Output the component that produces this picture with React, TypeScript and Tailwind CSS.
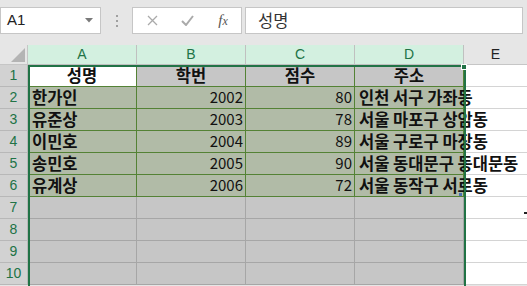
import React from 'react'

const rows = [
  ['성명', '학번', '점수', '주소'],
  ['한가인', '2002', '80', '인천 서구 가좌동'],
  ['유준상', '2003', '78', '서울 마포구 상암동'],
  ['이민호', '2004', '89', '서울 구로구 마장동'],
  ['송민호', '2005', '90', '서울 동대문구 동대문동'],
  ['유계상', '2006', '72', '서울 동작구 서로동'],
  ['', '', '', ''],
  ['', '', '', ''],
  ['', '', '', ''],
  ['', '', '', ''],
]

const kr = '[font-family:"Noto_Sans_CJK_KR",sans-serif]'

function cellClass(r: number, c: number) {
  if (r === 0 && c === 0) return 'bg-white border-r border-b border-[#548235] justify-center font-bold text-[16.5px]'
  if (r === 0) return 'bg-[#c6c6c6] border-r border-b border-[#548235] justify-center font-bold text-[16.5px]'
  if (r <= 5) {
    if (c === 1 || c === 2) return 'bg-[#b1bba7] border-r border-b border-[#548235] justify-end pr-[2px] text-[15px]'
    return 'bg-[#b1bba7] border-r border-b border-[#548235] pl-[4px] font-bold text-[16.5px]'
  }
  return 'bg-[#c6c6c6] border-r border-b border-[#a6a6a6]'
}

function App() {
  return (
    <div className="relative w-[527px] h-[286px] overflow-hidden bg-[#e6e6e6] font-['Liberation_Sans',sans-serif]">
      {/* formula bar */}
      <div className="flex h-[45px] items-start pt-[7px]">
        <div className="flex h-[27px] w-[101px] items-center justify-between border border-[#c6c6c6] bg-white pl-[6px] pr-[7px]">
          <span className="text-[15px] text-[#222]">A1</span>
          <svg width="8" height="5" viewBox="0 0 8 5"><path d="M0 0h8L4 4.5z" fill="#7a7a7a" /></svg>
        </div>
        <div className="flex h-[27px] w-[31px] flex-col items-center justify-center gap-[3px]">
          <span className="h-[2px] w-[2px] bg-[#a0a0a0]" />
          <span className="h-[2px] w-[2px] bg-[#a0a0a0]" />
          <span className="h-[2px] w-[2px] bg-[#a0a0a0]" />
        </div>
        <div className="flex h-[27px] w-[110px] items-center border border-[#c6c6c6] bg-white">
          <div className="flex w-[36px] justify-center pl-[2px]">
            <svg width="11" height="11" viewBox="0 0 11 11"><path d="M1 1l9 9M10 1l-9 9" stroke="#aaaaaa" strokeWidth="1.3" /></svg>
          </div>
          <div className="flex w-[36px] justify-center">
            <svg width="13" height="11" viewBox="0 0 13 11"><path d="M1 6l4 4 7-9" stroke="#aaaaaa" strokeWidth="2" fill="none" /></svg>
          </div>
          <div className="flex w-[36px] justify-center">
            <span className="font-['Liberation_Serif',serif] text-[15px] italic text-[#555] leading-none">f<span className="text-[12px]">x</span></span>
          </div>
        </div>
        <div className={`ml-[3px] flex h-[27px] w-[278px] items-center border border-[#c6c6c6] bg-white pl-[12px] text-[16.5px] text-[#333] ${kr}`}>
          성명
        </div>
      </div>

      {/* sheet */}
      <div className="grid grid-cols-[28px_109px_109px_109px_109px_1fr] grid-rows-[20px_repeat(10,22px)]">
        <div className="relative border-r border-b border-[#c6c6c6] bg-[#e6e6e6]">
          <svg className="absolute left-[11px] top-[3px]" width="14" height="14" viewBox="0 0 14 14"><path d="M14 0V14H0z" fill="#b4b4b4" /></svg>
        </div>
        {['A', 'B', 'C', 'D'].map((l) => (
          <div key={l} className="flex items-center justify-center border-r border-b border-[#c0c0c0] bg-[#d3f0e0] text-[14px] text-[#217346]">{l}</div>
        ))}
        <div className="flex items-center justify-center border-b border-[#c6c6c6] bg-[#e6e6e6] text-[14px] text-[#222]">E</div>

        {rows.map((row, r) => (
          <React.Fragment key={r}>
            <div className="flex items-center justify-center border-r border-b border-[#b8b8b8] bg-[#d2d2d2] text-[14px] text-[#217346]">{r + 1}</div>
            {row.map((v, c) => (
              <div
                key={c}
                className={`flex items-center whitespace-nowrap overflow-visible text-[#111] ${c === 3 ? 'relative z-10' : ''} ${kr} ${cellClass(r, c)}`}
              >
                {v}
              </div>
            ))}
            <div className="border-b border-[#d4d4d4] bg-white" />
          </React.Fragment>
        ))}
      </div>

      {/* selection overlay */}
      <div className="absolute left-[28px] top-[65px] z-20 h-[240px] w-[438px] border-2 border-[#217346]" />
      <div className="absolute left-[461px] top-[64px] z-30 h-[6px] w-[6px] border border-white bg-[#217346]" />
      <div className="absolute left-[459px] top-[193px] z-30 h-[3px] w-[3px] bg-[#4a6fb0]" />
      <div className="absolute left-[524px] top-[212px] h-[2px] w-[3px] bg-[#222]" />
    </div>
  )
}

export default App
